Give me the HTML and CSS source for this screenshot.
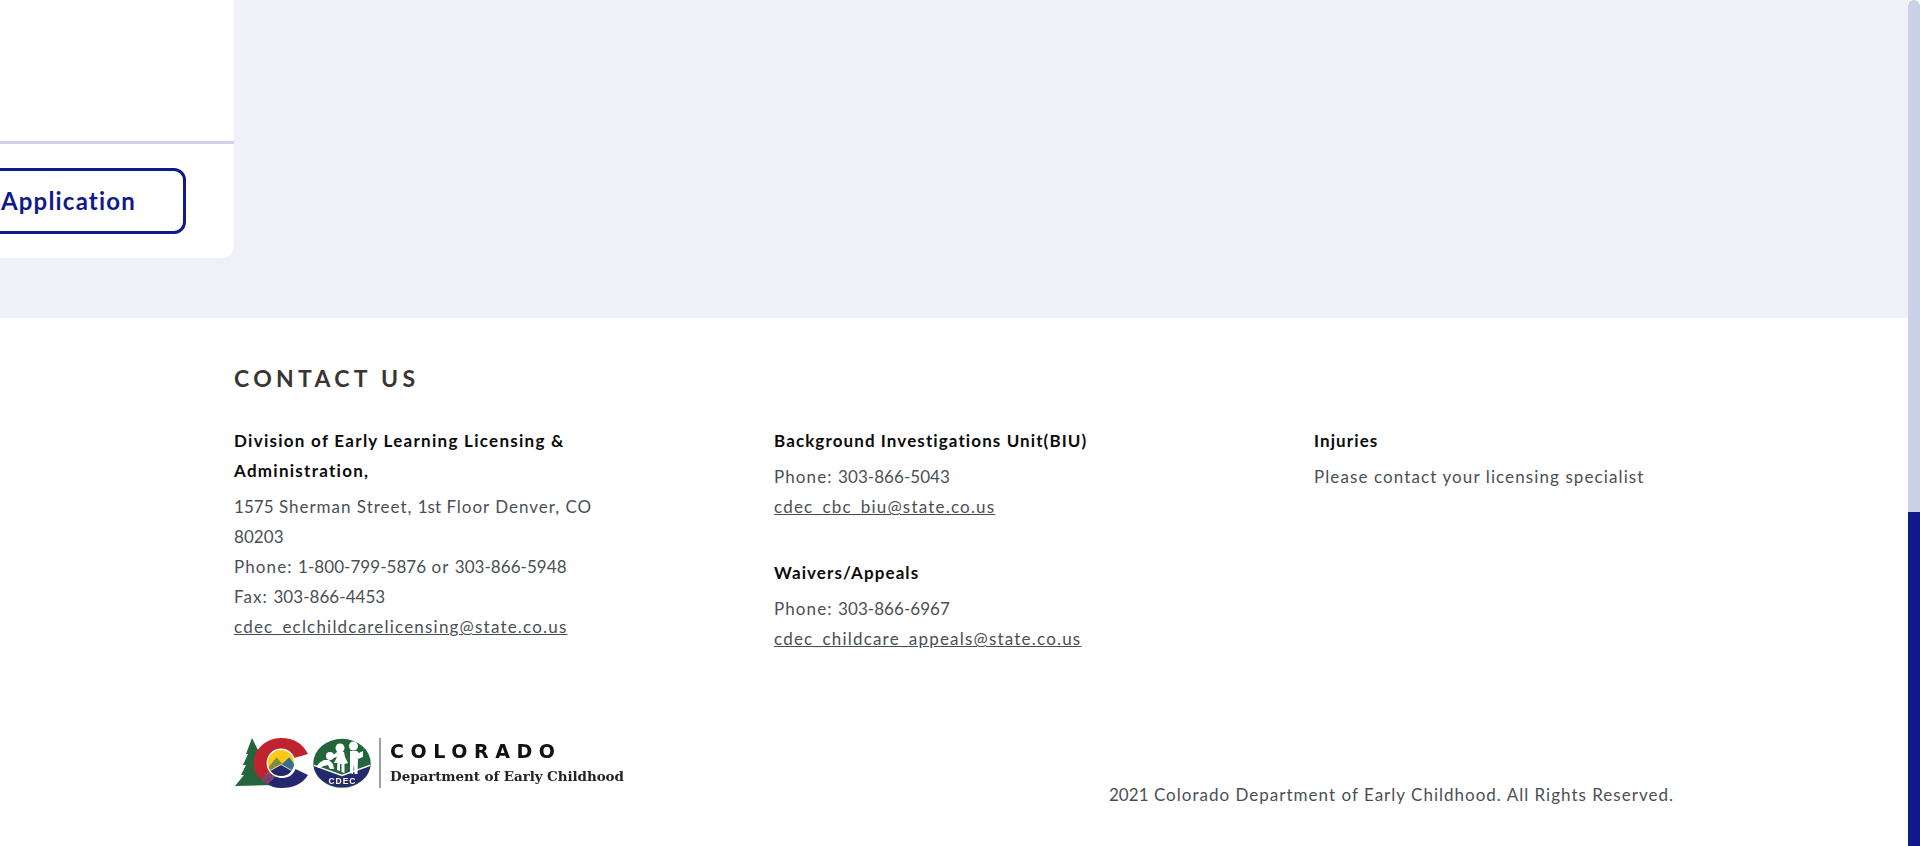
FILE: index.html
```html
<!DOCTYPE html>
<html lang="en">
<head>
<meta charset="utf-8">
<title>Contact Us - Colorado Department of Early Childhood</title>
<link rel="stylesheet" href="styles.css">
</head>
<body>
<div class="page">
  <div class="content">
    <main class="band">
      <section class="card">
        <div class="card-body"></div>
        <div class="card-actions">
          <button class="btn" type="button">Application</button>
        </div>
      </section>
    </main>
    <footer class="footer">
      <h2 class="footer-title">CONTACT US</h2>
      <div class="columns">
        <div class="col">
          <h3 class="col-head head-wide">Division of Early Learning Licensing &amp; Administration,</h3>
          <p class="line line-tight"><span class="num">1575</span> Sherman Street, <span class="num">1st</span> Floor Denver, CO <span class="num">80203</span></p>
          <p class="line">Phone: <span class="num">1-800-799-5876</span> or <span class="num">303-866-5948</span></p>
          <p class="line">Fax: <span class="num">303-866-4453</span></p>
          <p class="line"><a href="#">cdec_eclchildcarelicensing@state.co.us</a></p>
        </div>
        <div class="col">
          <div class="block">
            <h3 class="col-head">Background Investigations Unit(BIU)</h3>
            <p class="line">Phone: <span class="num">303-866-5043</span></p>
            <p class="line"><a href="#">cdec_cbc_biu@state.co.us</a></p>
          </div>
          <div class="block">
            <h3 class="col-head">Waivers/Appeals</h3>
            <p class="line">Phone: <span class="num">303-866-6967</span></p>
            <p class="line"><a href="#">cdec_childcare_appeals@state.co.us</a></p>
          </div>
        </div>
        <div class="col">
          <h3 class="col-head">Injuries</h3>
          <p class="line">Please contact your licensing specialist</p>
        </div>
      </div>
      <div class="footer-bottom">
        <svg class="logo" viewBox="0 0 392 54" width="392" height="54" role="img" aria-label="Colorado Department of Early Childhood">
          <path fill="#24653a" d="M18 1 L25 15 L23 15 L29 26 L27 26 L32 40 L42 48 L1 49 L10 38 L7 38 L12 28 L9 28 L14 17 L12 17 Z"/>
          <path fill="#c1222f" d="M74 17 Q66 1 47 1 A27.7 25 0 0 0 25.5 41.5 L36 35 A14 14 0 1 1 60 21 Z"/>
          <path fill="#7d3f6a" d="M25.5 41.5 L36 35 Q38 37.5 41 39 L34 47.5 Q29 45 25.5 41.5 Z"/>
          <path fill="#25286e" d="M74 38 Q66 51 47 51 Q40 51 34 47.5 L41 39 A14 14 0 0 0 61.5 32 Z"/>
          <circle cx="47" cy="26" r="14.4" fill="#fff"/>
          <clipPath id="sun"><circle cx="47" cy="26" r="13"/></clipPath>
          <g clip-path="url(#sun)">
            <rect x="33" y="12" width="28" height="28" fill="#fbc916"/>
            <path fill="#848c3a" d="M32 33 L42.7 20.3 L50 29 L42 40 L32 40 Z"/>
            <path fill="#356f8c" d="M48 27 L55.3 20.3 L62 30 L62 40 L50 40 Z"/>
            <path fill="#25286e" stroke="#fff" stroke-width=".8" d="M32 36 L47 27.5 L62 36 L62 42 L32 42 Z"/>
          </g>
          <ellipse cx="108" cy="26.3" rx="28.7" ry="24.5" fill="#25653b"/>
          <path fill="#25286e" d="M79.6 29 L108 39.5 L136.4 29 A28.7 24.5 0 0 1 79.6 29 Z"/>
          <path fill="none" stroke="#fff" stroke-width="1.4" d="M80 28.3 L108 38.4 L136 28.3"/>
          <g fill="#fff">
            <circle cx="96" cy="19" r="4"/>
            <path d="M83 29 L85 26 L90 23 L95 23 L99 27 L100 32 L96 32 L94 28 L90 29 L84 31 Z"/>
            <circle cx="106" cy="11" r="4.500"/>
            <path d="M103 15 L110 15 L111 20 L114 26 L110.500 27 L110.500 36 L107.500 35 L107.500 27 L106 27 L106 34 L103 33 L103.500 26 L100 26 L103 20 L99 21 L98 19 Z"/>
            <circle cx="119.500" cy="9" r="4.500"/>
            <path d="M116 14 L123 14 L125 16 L129 14 L129 20 L124 22 L123.500 37 L120.500 37 L120 27 L119 37 L116 36 Z"/>
          </g>
          <text class="logo-cdec" x="108" y="47" text-anchor="middle" textLength="27">CDEC</text>
          <rect x="145.300" y="1" width="1.400" height="50" fill="#777"/>
          <text class="logo-state" x="156" y="21" textLength="165">COLORADO</text>
          <text class="logo-dept" x="156" y="44" textLength="234">Department of Early Childhood</text>
        </svg>
        <p class="line copyright"><span class="num">2021</span> Colorado Department of Early Childhood. All Rights Reserved.</p>
      </div>
    </footer>
  </div>
  <div class="scrollbar"><div class="scroll-thumb"></div></div>
</div>
</body>
</html>
```
FILE: styles.css
```css
* { box-sizing: border-box; }
html, body { margin: 0; height: 100%; overflow: hidden; background: #fff; }
body { font-family: "Lato", "Liberation Sans", sans-serif; }
.page { display: flex; height: 846px; }
.content { width: 1908px; flex: none; }
.scrollbar { width: 12px; flex: none; display: flex; flex-direction: column; justify-content: flex-end; height: 846px; background: #cdd1e8; border-radius: 6px 6px 0 0; }
.scroll-thumb { height: 334px; background: #0f1a8c; }
.band { height: 318px; background: #eff0f8; }
.card { width: 234px; height: 258px; background: #fff; border-radius: 0 0 12px 0; display: flex; flex-direction: column; overflow: hidden; }
.card-body { height: 144px; flex: none; border-bottom: 3px solid #d0d0e8; }
.card-actions { display: flex; justify-content: flex-end; padding: 24px 48px 0 0; }
.btn { flex: none; width: 240px; height: 66px; background: #fff; border: 3px solid #0f1a8c; border-radius: 12px; color: #0f1a8c; font: 700 24px "Lato", "Liberation Sans", sans-serif; letter-spacing: 1.2px; text-align: right; padding: 0 47px 1px 0; }
.footer { width: 1440px; margin: 0 auto; padding-top: 45px; }
.footer-title { margin: 0 0 33px; font-size: 23px; line-height: 30px; font-weight: 700; letter-spacing: 4.3px; color: #3a3530; }
.columns { display: grid; grid-template-columns: repeat(3, 540px); height: 228px; }
.col { max-width: 372px; }
.col:last-child { max-width: none; }
.block { margin-bottom: 36px; }
.col-head { margin: 0 0 6px; font-size: 17px; line-height: 30px; font-weight: 700; letter-spacing: 1.1px; color: #0b0b0b; }
.head-wide { letter-spacing: 1.27px; }
.line { margin: 0; font-size: 17px; line-height: 30px; letter-spacing: 1.1px; color: #4a4f55; }
.line-tight { letter-spacing: .98px; }
.num { letter-spacing: .05px; }
.line a { color: inherit; text-decoration: underline; letter-spacing: 1.2px; }
.footer-bottom { display: flex; justify-content: space-between; align-items: flex-end; height: 73px; margin-top: 83px; }
.logo { display: block; align-self: flex-start; filter: blur(.3px); }
.logo-cdec { font: 700 8.5px "Liberation Sans", sans-serif; fill: #fff; }
.logo-state { font: 700 19px "DejaVu Sans", sans-serif; fill: #111; }
.logo-dept { font: 700 13.5px "DejaVu Serif", serif; fill: #222; }
.copyright { white-space: nowrap; letter-spacing: 1.01px; }
```
